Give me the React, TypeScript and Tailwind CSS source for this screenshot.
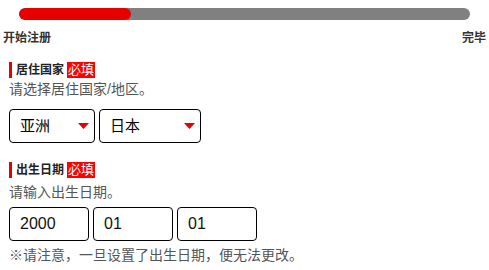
const font = { fontFamily: '"Liberation Sans", "Noto Sans CJK SC", sans-serif' };

function Label({ text }: { text: string }) {
  return (
    <div className="flex items-center h-4">
      <span className="w-[3px] h-4 bg-[#e60000] mr-[4px]" />
      <span className="text-[12px] font-bold text-[#222] leading-4">{text}</span>
      <span className="ml-[3px] bg-[#ff0000] text-white text-[13px] leading-4 px-[1px]">必填</span>
    </div>
  );
}

function Select({ value, w }: { value: string; w: string }) {
  return (
    <div className={`${w} h-[34px] border border-black rounded-[4px] flex items-center justify-between pl-[10px] pr-[5px]`}>
      <span className="text-[15px] text-black">{value}</span>
      <svg width="11" height="6" viewBox="0 0 11 6">
        <polygon points="0,0 11,0 5.5,6" fill="#e60000" />
      </svg>
    </div>
  );
}

function Field({ value }: { value: string }) {
  return (
    <div className="w-[80px] h-[34px] border border-black rounded-[4px] flex items-center pl-[10px]">
      <span className="text-[16px] text-[#111]">{value}</span>
    </div>
  );
}

export default function App() {
  return (
    <div className="w-[489px] h-[270px] bg-white overflow-hidden" style={font}>
      {/* progress */}
      <div className="px-[19px] pt-[8px]">
        <div className="h-[12px] rounded-full bg-[#808080] overflow-hidden">
          <div className="h-full w-[112px] rounded-full bg-[#e60000]" />
        </div>
      </div>
      <div className="flex justify-between px-[3px] mt-[10px] text-[12px] font-bold text-[#333] leading-4">
        <span>开始注册</span>
        <span>完毕</span>
      </div>

      {/* country */}
      <div className="px-[9px] mt-[16px]">
        <Label text="居住国家" />
        <p className="text-[14px] text-[#555] mt-[1px] leading-5">请选择居住国家/地区。</p>
        <div className="flex gap-[4px] mt-[10px]">
          <Select value="亚洲" w="w-[86px]" />
          <Select value="日本" w="w-[102px]" />
        </div>
      </div>

      {/* birthday */}
      <div className="px-[9px] mt-[19px]">
        <Label text="出生日期" />
        <p className="text-[14px] text-[#555] mt-[4px] leading-5">请输入出生日期。</p>
        <div className="flex gap-[4px] mt-[5px]">
          <Field value="2000" />
          <Field value="01" />
          <Field value="01" />
        </div>
        <p className="text-[14px] text-[#555] mt-[4px] leading-5">※请注意，一旦设置了出生日期，便无法更改。</p>
      </div>
    </div>
  );
}
